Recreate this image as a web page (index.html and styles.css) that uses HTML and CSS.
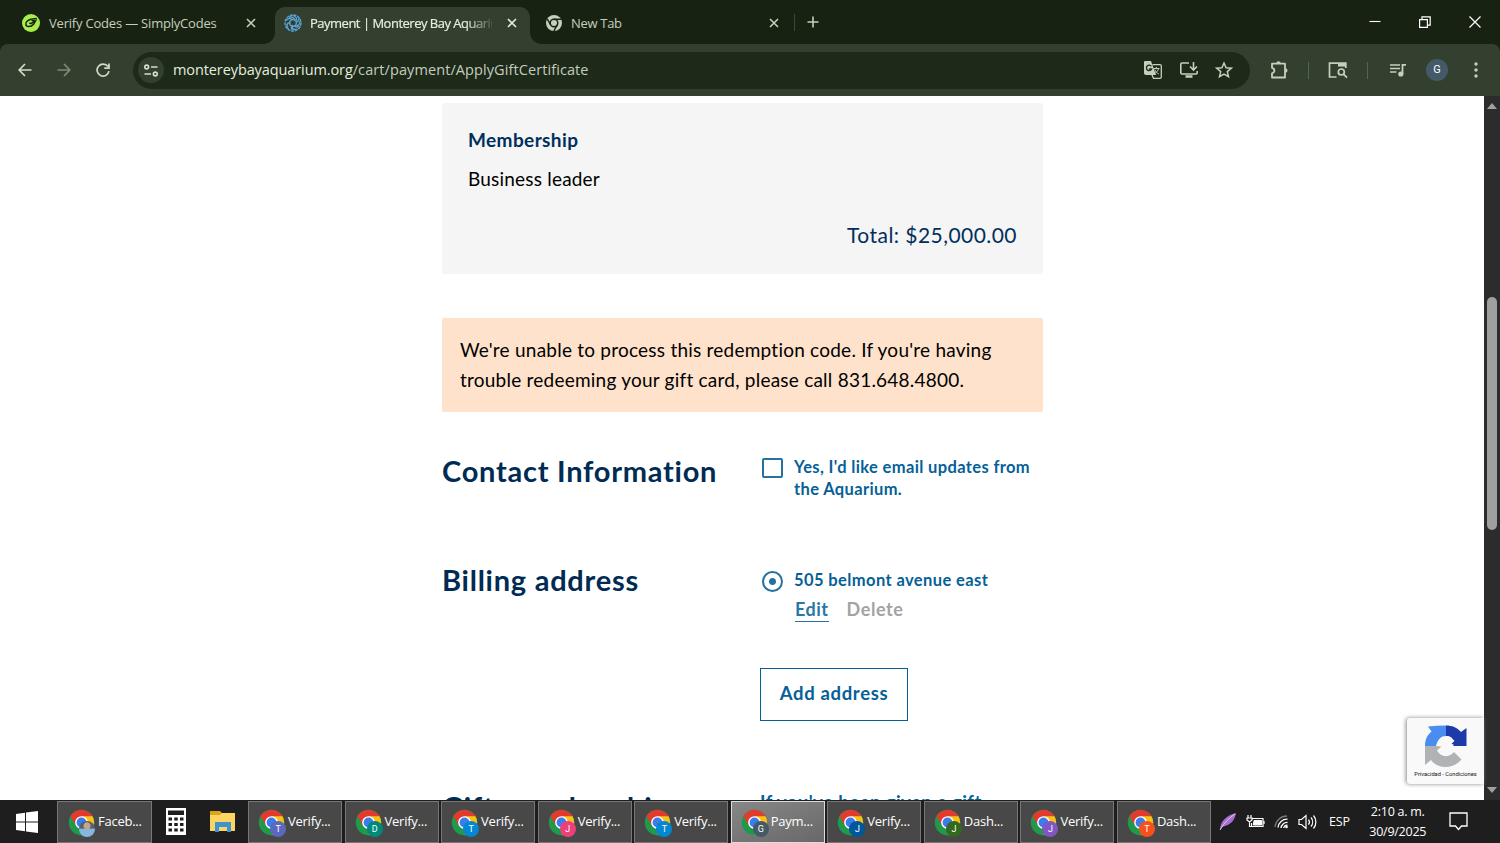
FILE: index.html
```html
<!DOCTYPE html>
<html lang="en">
<head>
    <meta charset="UTF-8">
    <meta name="viewport" content="width=device-width, initial-scale=1.0">
    <title>Payment | Monterey Bay Aquarium</title>
    <link rel="stylesheet" href="styles.css">
</head>
<body>
<svg class="sprite" aria-hidden="true">
    <symbol id="close" viewBox="0 0 10 10"><path d="M1 1l8 8M9 1l-8 8" fill="none" stroke="currentColor" stroke-width="1.6"/></symbol>
    <symbol id="chrome" viewBox="0 0 28 28">
        <circle cx="14" cy="14" r="13.2" fill="#1e9a4a"/>
        <path d="M14 14L2.6 7.4A13.2 13.2 0 0 1 25.4 7.4L25.4 8z" fill="#e23b2e"/>
        <path d="M14 7.4h11.4A13.2 13.2 0 0 1 14 27.2l5.7-9.9z" fill="#fbc116"/>
        <path d="M2.6 7.4L8.3 17.3 14 14 14 7.4z" fill="#e23b2e"/>
        <circle cx="14" cy="14" r="6.6" fill="#fff"/>
        <circle cx="14" cy="14" r="5.1" fill="#3c7cec"/>
    </symbol>
</svg>

<div class="tabs">
    <div class="tab">
        <svg class="favicon" viewBox="0 0 18 18"><circle cx="9" cy="9" r="9" fill="#a9ee4c"/><path d="M14.800 4.500L10.500 5C7 5.200 3.800 7.500 3.800 10c0 3.500 5.500 3.200 7.800.3L13.500 7 9 9.700 7.300 8.800M13.500 7L9.500 6.500" fill="none" stroke="#182213" stroke-width="1.400"/></svg>
        <span class="tab-title t1">Verify Codes — SimplyCodes</span>
        <svg class="close"><use href="#close"/></svg>
    </div>
    <div class="tab active">
        <svg class="favicon" viewBox="0 0 18 18" fill="none" stroke="#5aa5d8" stroke-width="1.3"><circle cx="9" cy="9" r="8" stroke-dasharray="3 .8"/><circle cx="9" cy="9" r="3.300"/><path d="M9 1.500c3 1 4 3 3.500 5M16 7c0 3-1.500 4.500-3.600 4.600M13.500 15c-3 1-5-.2-5.600-2M4.500 15c-2-2-2-4.500-.2-6M2 6.500C4 4 6.500 4 8 5.500M5 3c3-.5 5 .5 6 3M15 4c0 3-1 4-3 4M15.500 12c-2 1.500-4 1-5.500-.5M8.500 16.500C7 14 7.500 12 9 11M2.500 12c.5-2.500 2-3.500 4-3"/></svg>
        <span class="tab-title t2">Payment | Monterey Bay Aquarium</span>
        <svg class="close"><use href="#close"/></svg>
    </div>
    <div class="tab">
        <svg class="favicon small" viewBox="0 0 16 16"><circle cx="8" cy="8" r="8" fill="#c4d0bc"/><circle cx="8" cy="8" r="3.800" fill="none" stroke="#182213" stroke-width="1.500"/><path d="M8 4.200h7.200M4.700 9.900L1.200 3.800M11.300 9.900L7.800 16" stroke="#182213" stroke-width="1.400"/></svg>
        <span class="tab-title t3">New Tab</span>
        <svg class="close"><use href="#close"/></svg>
    </div>
    <span class="tab-split"></span>
    <svg class="new-tab" viewBox="0 0 12 12"><path d="M6 .5v11M.5 6h11" stroke="currentColor" stroke-width="1.600"/></svg>
    <div class="window-buttons">
        <svg width="12" height="12" viewBox="0 0 12 12"><path d="M.5 5.500h11" stroke="#fff" stroke-width="1.100"/></svg>
        <svg width="12" height="12" viewBox="0 0 12 12" fill="none" stroke="#fff" stroke-width="1.200"><path d="M.6 3.600h7.800v7.800H.6zM3 3.600V.9h8.200v8.200H8.400"/></svg>
        <svg width="12" height="12" viewBox="0 0 12 12"><path d="M.5.5l11 11M11.500.5l-11 11" stroke="#fff" stroke-width="1.200"/></svg>
    </div>
</div>

<div class="toolbar">
    <div class="nav">
        <svg viewBox="0 0 14 14"><path d="M13.500 7H1.500M7 1L1.200 7 7 13"/></svg>
        <svg class="dim" viewBox="0 0 14 14"><path d="M.5 7h12M7 1l5.800 6L7 13"/></svg>
        <svg viewBox="0 0 14 14"><path d="M12 3.600A6 6 0 1 0 13 8.200M13 .5v4.700H8.300"/></svg>
    </div>
    <div class="omnibox">
        <span class="site-info">
            <svg width="14" height="13" viewBox="0 0 14 13" fill="none" stroke="#d5decf" stroke-width="1.600"><circle cx="2.700" cy="3" r="1.900"/><path d="M7 3h6.500M.5 10H7"/><circle cx="11.300" cy="10" r="1.900"/></svg>
        </span>
        <span class="url">montereybayaquarium.org<span>/cart/payment/ApplyGiftCertificate</span></span>
        <div class="omnibox-icons">
            <svg width="20" height="20" viewBox="0 0 20 20"><path d="M2 1h6l5 14H3a2 2 0 0 1-2-2V2a1 1 0 0 1 1-1z" fill="#c4d0bc"/><path d="M9.500 4.700H17a1.300 1.300 0 0 1 1.300 1.300v11a1.300 1.300 0 0 1-1.300 1.300h-6.500L9 15" fill="none" stroke="#c4d0bc" stroke-width="1.300"/><path d="M8.300 6.300A2.700 2.700 0 1 0 8.600 9H6" fill="none" stroke="#1d2919" stroke-width="1.300"/><path d="M10.500 8.500h6M13.300 7v1.500M15.500 8.500c-.5 2.500-2 4-4 5.200M11.800 9.500c.8 2 2 3.500 4 4.500" fill="none" stroke="#c4d0bc" stroke-width="1"/></svg>
            <svg width="20" height="18" viewBox="0 0 20 18" fill="none" stroke="#c4d0bc" stroke-width="1.600"><path d="M10 2H3a1.200 1.200 0 0 0-1.200 1.200v8.600A1.200 1.200 0 0 0 3 13h14a1.200 1.200 0 0 0 1.200-1.200V10M14.500 1v7.500M11 5.500L14.500 9 18 5.500"/><path d="M6.500 15.500h7" stroke-width="2.500"/></svg>
            <svg width="18" height="18" viewBox="0 0 18 18"><path d="M9 2l2.100 4.700 5.100.5-3.900 3.400 1.200 5.100L9 13l-4.500 2.700 1.200-5.100L1.800 7.200l5.100-.5z" fill="none" stroke="#c4d0bc" stroke-width="1.500"/></svg>
        </div>
    </div>
    <div class="extensions">
        <svg width="20" height="20" viewBox="0 0 20 20"><path d="M3 3.700h13v13.800H3V13.300c3.200-.8 3.200-4.600 0-5.400z" fill="none" stroke="#c4d0bc" stroke-width="1.800" stroke-linejoin="round"/><path d="M7.300 3.500a2.200 2.200 0 0 1 4.400 0zM16.300 8.300a2.200 2.200 0 0 1 0 4.400z" fill="#c4d0bc"/></svg>
        <i></i>
        <svg width="20" height="18" viewBox="0 0 20 18" fill="none" stroke="#c4d0bc" stroke-width="1.700"><path d="M8.500 16H1.500V2.200h16.300V7"/><path d="M10 3.800h8" stroke-width="3.500"/><circle cx="13.300" cy="11" r="3"/><path d="M15.500 13.200l3.500 3.500"/></svg>
        <i></i>
        <svg class="media" width="18" height="16" viewBox="0 0 18 16"><path d="M1 3h10M1 6.500h10M1 10h6.500" stroke="#c4d0bc" stroke-width="1.600"/><path d="M13.500 12V2.800H17" fill="none" stroke="#c4d0bc" stroke-width="1.800"/><circle cx="11.800" cy="12" r="2.600" fill="#c4d0bc"/></svg>
        <span class="avatar">G</span>
        <svg class="menu" width="4" height="16" viewBox="0 0 4 16" fill="#c4d0bc"><circle cx="2" cy="2" r="1.700"/><circle cx="2" cy="8" r="1.700"/><circle cx="2" cy="14" r="1.700"/></svg>
    </div>
</div>

<div class="viewport">
    <main>
        <section class="summary">
            <h3>Membership</h3>
            <p>Business leader</p>
            <p class="total">Total: $25,000.00</p>
        </section>
        <div class="alert">We're unable to process this redemption code. If you're having<br>trouble redeeming your gift card, please call 831.648.4800.</div>
        <section class="row contact">
            <h2>Contact Information</h2>
            <label class="option">
                <span class="checkbox"></span>
                <span>Yes, I'd like email updates from<br>the Aquarium.</span>
            </label>
        </section>
        <section class="row billing">
            <h2>Billing address</h2>
            <div>
                <label class="option">
                    <span class="radio"></span>
                    <span class="address">505 belmont avenue east</span>
                </label>
                <div class="links"><a class="edit">Edit</a><a class="delete">Delete</a></div>
                <button class="add">Add address</button>
            </div>
        </section>
        <section class="row gift">
            <h2>Gift membership</h2>
            <p>If you've been given a gift</p>
        </section>
    </main>
    <div class="scrollbar">
        <span class="arrow up"></span>
        <span class="thumb"></span>
        <span class="arrow down"></span>
    </div>
    <div class="recaptcha">
        <svg width="42" height="43" viewBox="0 0 42 43">
            <path d="M0 21C0 15 2 10 6.500 6.500L3 1.500C9 1 15 .5 21 .5v10.500c-5 0-8 3-10 10z" fill="#4a8cf0"/>
            <path d="M21 .5c6 0 11 2 15 6.500L41.500 3v18H24l5.500-5c-2-3-5-5-8.500-5z" fill="#1c3aa9"/>
            <path d="M0 21h17l-5 4.500c4 7 12 7.500 17 1.500l7.500 7.500C28 44.500 13 44.500 6 35l-6 5z" fill="#b0b2b3"/>
            <path d="M21 11c2 0 4.500.5 6 2l-3 4 5 3-5 5c-2 0-4-1-4-3l-9-1c1-2 2-5 4-7l5 3z" fill="#f9f9f9"/>
        </svg>
        <span>Privacidad - Condiciones</span>
    </div>
</div>

<div class="taskbar">
    <svg class="start" viewBox="0 0 22 22" fill="#fff"><path d="M0 3l9-1.200v8.700H0zM10 1.600L22 0v10.500H10zM0 11.500h9v8.700L0 19zM10 11.500h12V22l-12-1.600z"/></svg>
    <div class="task first"><svg><use href="#chrome"/></svg><b class="photo"></b><span>Faceb...</span></div>
    <div class="pinned">
        <svg width="20" height="27" viewBox="0 0 20 27"><path d="M0 0h20v27H0z" fill="#fff"/><path d="M2 2.500h16v4.500H2z" fill="#1d1d1d"/><path d="M2.500 11h15M2.500 16.500h15M2.500 22h15" stroke="#1d1d1d" stroke-width="3" stroke-dasharray="3.500 2.250"/></svg>
        <svg width="26" height="23" viewBox="0 0 26 23"><path d="M0 1h10l2 2h13v8H0z" fill="#e0a11b"/><path d="M0 5h10l2-2h13v18H0z" fill="#fcd462"/><path d="M5 12h16v10h-4v-5H9v5H5z" fill="#3f93cf"/></svg>
    </div>
    <div class="tasks">
        <div class="task"><svg><use href="#chrome"/></svg><b class="indigo">T</b><span>Verify...</span></div>
        <div class="task"><svg><use href="#chrome"/></svg><b class="teal">D</b><span>Verify...</span></div>
        <div class="task"><svg><use href="#chrome"/></svg><b class="blue">T</b><span>Verify...</span></div>
        <div class="task"><svg><use href="#chrome"/></svg><b class="pink">J</b><span>Verify...</span></div>
        <div class="task"><svg><use href="#chrome"/></svg><b class="blue">T</b><span>Verify...</span></div>
        <div class="task current"><svg><use href="#chrome"/></svg><b class="slate">G</b><span>Paym...</span></div>
        <div class="task"><svg><use href="#chrome"/></svg><b class="navy">J</b><span>Verify...</span></div>
        <div class="task"><svg><use href="#chrome"/></svg><b class="green">J</b><span>Dash...</span></div>
        <div class="task"><svg><use href="#chrome"/></svg><b class="purple">J</b><span>Verify...</span></div>
        <div class="task"><svg><use href="#chrome"/></svg><b class="orange">T</b><span>Dash...</span></div>
    </div>
    <div class="tray">
        <svg width="18" height="19" viewBox="0 0 18 19"><path d="M1 18C1 9 8 3 17 1c-1 7-5 12-14 14z" fill="#a66fd0"/><path d="M1 18C5 11 10 6 16 2" stroke="#e0c6f2" fill="none"/></svg>
        <svg width="19" height="14" viewBox="0 0 19 14" fill="none" stroke="#fff"><path d="M6 3.500h11v8H5.500V8" stroke-width="1.200"/><path d="M8 5.500h7.500v4.500H7.300z" fill="#fff"/><path d="M18 6v3M2 0v3M5 0v3M1 3h5v2L3.500 7 1 5zM3.500 7v4.500H6" stroke-width="1.200"/></svg>
        <svg width="15" height="15" viewBox="0 0 15 15" fill="none" stroke-width="1.300"><path d="M1 13A12 12 0 0 1 13 2" stroke="#777"/><path d="M4 13.500a9 9 0 0 1 9.500-8.300M7 14a6 6 0 0 1 6.500-5.500" stroke="#fff"/><path d="M9.800 14a3 3 0 0 1 3.700-2.700" stroke="#fff"/><circle cx="12.500" cy="13" r="1.300" fill="#fff"/></svg>
        <svg width="19" height="16" viewBox="0 0 19 16" fill="none" stroke="#fff" stroke-width="1.200"><path d="M1 5.500h2.500L8 1.500v13L3.500 10.500H1zM10.500 5.500a4 4 0 0 1 0 5M13 3.500a7 7 0 0 1 0 9M15.500 1.500a10 10 0 0 1 0 13"/></svg>
        <span class="lang">ESP</span>
        <div class="clock"><span>2:10 a. m.</span><span>30/9/2025</span></div>
        <svg width="19" height="19" viewBox="0 0 19 19" fill="none" stroke="#fff" stroke-width="1.300"><path d="M1 1h17v13h-5.500L9.500 17.500 6.500 14H1z"/></svg>
    </div>
</div>
</body>
</html>
```
FILE: styles.css
```css
* {
    box-sizing: border-box;
}
body {
    margin: 0;
    width: 1500px;
    height: 843px;
    overflow: hidden;
    display: flex;
    flex-direction: column;
    font-family: "Open Sans", "Noto Sans", sans-serif;
    background-color: #fff;
}
h2, h3, p {
    margin: 0;
}
svg {
    flex: none;
}
.sprite {
    position: absolute;
    width: 0;
    height: 0;
}

/* browser tabs */
.tabs {
    display: flex;
    align-items: center;
    height: 44px;
    flex: none;
    background-color: #182213;
    color: #c4d0bc;
}
.tab {
    position: relative;
    display: flex;
    align-items: center;
    width: 255px;
    height: 37px;
    margin-top: 7px;
    padding: 0 13px 6px 9px;
    font-size: 13px;
}
.tab:first-child {
    width: 275px;
    padding-left: 22px;
    padding-right: 19px;
}
.tab:nth-child(3) {
    width: 264px;
    padding-left: 16px;
    padding-right: 15px;
}
.tab.active {
    background-color: #33402f;
    color: #e6eddf;
    border-radius: 10px 10px 0 0;
}
.tab.active::before,
.tab.active::after {
    content: "";
    position: absolute;
    bottom: 0;
    width: 11px;
    height: 11px;
}
.tab.active::before {
    left: -11px;
    background: radial-gradient(circle at 0 0, transparent 10.5px, #33402f 11px);
}
.tab.active::after {
    right: -11px;
    background: radial-gradient(circle at 100% 0, transparent 10.5px, #33402f 11px);
}
.favicon {
    width: 18px;
    height: 18px;
    margin-right: 9px;
}
.favicon.small {
    width: 16px;
    height: 16px;
}
.tab-title {
    flex: 1;
    overflow: hidden;
    white-space: nowrap;
}
.t1 {
    letter-spacing: -0.2px;
}
.t2 {
    margin-left: -1px;
    margin-right: 15px;
    letter-spacing: -0.5px;
    -webkit-text-stroke: 0.2px;
    -webkit-mask-image: linear-gradient(90deg, #000 155px, transparent 186px);
    mask-image: linear-gradient(90deg, #000 155px, transparent 186px);
}
.t3 {
    letter-spacing: -0.3px;
}
.close {
    width: 10px;
    height: 10px;
}
.tab-split {
    width: 1px;
    height: 17px;
    background-color: #3b4836;
}
.new-tab {
    width: 12px;
    height: 12px;
    margin-left: 12px;
}
.window-buttons {
    display: flex;
    gap: 38px;
    margin-left: auto;
    margin-right: 19px;
}

/* address bar */
.toolbar {
    display: flex;
    align-items: center;
    flex: none;
    height: 52px;
    background-color: #33402f;
    border-radius: 8px 8px 0 0;
    box-shadow: 0 -8px 0 0 #182213;
}
.nav {
    display: flex;
    gap: 25px;
    width: 133px;
    padding-left: 18px;
}
.nav svg {
    width: 14px;
    height: 14px;
    fill: none;
    stroke: #d0dbc9;
    stroke-width: 1.7;
}
.nav .dim {
    stroke: #7f8b78;
}
.omnibox {
    display: flex;
    align-items: center;
    width: 1117px;
    height: 37px;
    padding: 0 17px 0 5px;
    border-radius: 19px;
    background-color: #1d2919;
}
.site-info {
    display: flex;
    align-items: center;
    justify-content: center;
    width: 26px;
    height: 26px;
    border-radius: 50%;
    background-color: #33402f;
}
.url {
    margin-left: 9px;
    padding-bottom: 2px;
    font-size: 14.5px;
    letter-spacing: -0.1px;
    color: #e6eddf;
}
.url span {
    letter-spacing: 0.09px;
    color: #c4cdbd;
}
.omnibox-icons {
    display: flex;
    align-items: center;
    gap: 16px;
    margin-left: auto;
}
.extensions {
    display: flex;
    flex: 1;
    align-items: center;
    gap: 19px;
    padding: 0 22px 0 19px;
}
.extensions i {
    width: 1px;
    height: 17px;
    background-color: #55654f;
}
.extensions .media {
    margin-left: 2px;
}
.extensions .menu {
    margin-left: auto;
}
.avatar {
    width: 22px;
    height: 22px;
    border-radius: 50%;
    background-color: #455a68;
    color: #fff;
    font: 11px/22px Roboto, sans-serif;
    text-align: center;
}

/* page */
.viewport {
    position: relative;
    display: flex;
    flex: none;
    height: 704px;
    overflow: hidden;
    font-family: Lato, sans-serif;
    font-variant-ligatures: none;
}
main {
    width: 601px;
    margin-left: 442px;
    padding-top: 7px;
}
.summary {
    height: 171px;
    padding: 23px 26px;
    border-radius: 3px;
    background-color: #f5f5f5;
}
.summary h3 {
    font-size: 19px;
    line-height: 28px;
    color: #002f5b;
    letter-spacing: 0.4px;
}
.summary p {
    margin-top: 11px;
    font-size: 19px;
    letter-spacing: 0.2px;
    line-height: 28px;
    color: #000;
}
.summary .total {
    margin-top: 28px;
    font-size: 21px;
    letter-spacing: 0.45px;
    text-align: right;
    color: #002f5b;
}
.alert {
    height: 94px;
    margin-top: 44px;
    padding: 17px 18px;
    border-radius: 2px;
    background-color: #ffe2cb;
    font-size: 19px;
    letter-spacing: 0.23px;
    line-height: 30px;
    color: #000;
    white-space: nowrap;
}
.row {
    display: grid;
    grid-template-columns: 318px 1fr;
    white-space: nowrap;
}
.row h2 {
    font-size: 29px;
    letter-spacing: 0.75px;
    line-height: 36px;
    color: #002b54;
}
.contact {
    height: 109px;
    margin-top: 41px;
}
.billing {
    height: 227px;
}
.option {
    display: flex;
    gap: 11px;
    padding-left: 2px;
    font-size: 16.5px;
    letter-spacing: 0.36px;
    font-weight: bold;
    line-height: 22px;
    color: #065f97;
}
.contact .option {
    padding-top: 3px;
}
.billing .option {
    padding-top: 7px;
}
.address {
    letter-spacing: 0.4px;
}
.checkbox, .radio {
    flex: none;
    width: 21px;
    height: 20px;
    margin-top: 2px;
    border: 2px solid #27719f;
    border-radius: 2px;
}
.radio {
    height: 21px;
    border-radius: 50%;
    background: radial-gradient(circle, #27719f 3px, #fff 4px);
}
.links {
    display: flex;
    gap: 18px;
    margin-top: 5px;
    padding-left: 35px;
    font-size: 18px;
    letter-spacing: 0.5px;
    font-weight: bold;
    line-height: 24px;
}
.edit {
    height: 25px;
    border-bottom: 1px solid #27719f;
    color: #2a76a6;
}
.delete {
    letter-spacing: 0.6px;
    color: #a3a3a3;
}
.add {
    display: block;
    width: 148px;
    height: 53px;
    margin-top: 46px;
    padding: 0 0 3px;
    border: 1px solid #065f97;
    background-color: #fff;
    color: #065f97;
    font: bold 18.5px Lato, sans-serif;
    letter-spacing: 0.65px;
}
.gift p {
    padding-top: 1px;
    font-size: 18.5px;
    letter-spacing: 0.45px;
    font-weight: bold;
    line-height: 24px;
    color: #065f97;
}
.scrollbar {
    display: flex;
    flex-direction: column;
    align-items: center;
    width: 16px;
    margin-left: auto;
    background-color: #2c2c2c;
}
.arrow {
    border: 5px solid transparent;
}
.up {
    margin-top: 2px;
    border-bottom: 6px solid #a0a0a0;
}
.down {
    margin-top: auto;
    margin-bottom: 2px;
    border-top: 6px solid #a0a0a0;
}
.thumb {
    width: 10px;
    height: 233px;
    margin-top: 188px;
    border-radius: 5px;
    background-color: #9f9f9f;
}
.recaptcha {
    position: absolute;
    right: 16px;
    bottom: 16px;
    display: flex;
    flex-direction: column;
    align-items: center;
    width: 77px;
    height: 66px;
    padding-top: 7px;
    border-radius: 3px 0 0 3px;
    background-color: #f9f9f9;
    box-shadow: -1px 0 4px #888;
    font: 5.7px/13px Roboto, sans-serif;
    color: #111;
    white-space: nowrap;
}

/* taskbar */
.taskbar {
    display: flex;
    flex: none;
    height: 43px;
    background-color: #1e1e1e;
    color: #fff;
}
.start {
    width: 22px;
    height: 22px;
    margin: 11px 19px 0 16px;
}
.task {
    position: relative;
    display: flex;
    align-items: center;
    width: 94px;
    height: 42px;
    padding-left: 9px;
    margin-top: 1px;
    border: 1px solid #777;
    background-color: #484848;
    font-size: 13px;
    letter-spacing: -0.25px;
    white-space: nowrap;
}
.task.first {
    width: 95px;
    padding-left: 10px;
}
.task.current {
    border-color: #ddd;
    background: linear-gradient(160deg, #878787, #686868);
}
.task svg {
    width: 27px;
    height: 27px;
    margin-right: 3px;
}
.task span {
    padding-bottom: 2px;
}
/* profile badge over the browser icon */
.task b {
    position: absolute;
    left: 21px;
    top: 19px;
    width: 16px;
    height: 16px;
    border-radius: 50%;
    font: 9px/16px Roboto, sans-serif;
    text-align: center;
}
.photo {
    background: radial-gradient(circle at 50% 30%, #c9a48d 3px, transparent 4px), linear-gradient(#52616b 45%, #86b7df 50%);
}
.indigo { background-color: #5a68c0; }
.teal { background-color: #00897b; }
.blue { background-color: #0288d1; }
.pink { background-color: #ec407a; }
.slate { background-color: #455a64; }
.navy { background-color: #01579b; }
.green { background-color: #33691e; }
.purple { background-color: #7e57c2; }
.orange { background-color: #f4511e; }
.pinned {
    display: flex;
    align-items: center;
    gap: 24px;
    width: 96px;
    padding-left: 14px;
}
.tasks {
    display: flex;
    justify-content: space-between;
    width: 963px;
}
.tray {
    display: flex;
    align-items: center;
    gap: 9px;
    flex: 1;
    padding-left: 8px;
    font-size: 12px;
}
.lang {
    margin-left: 3px;
    font-size: 12.5px;
    letter-spacing: -0.2px;
}
.clock {
    display: flex;
    flex-direction: column;
    align-items: center;
    width: 60px;
    margin: 0 12px 0 9px;
    font-size: 12.5px;
    line-height: 20px;
    letter-spacing: -0.25px;
    white-space: nowrap;
}
```
